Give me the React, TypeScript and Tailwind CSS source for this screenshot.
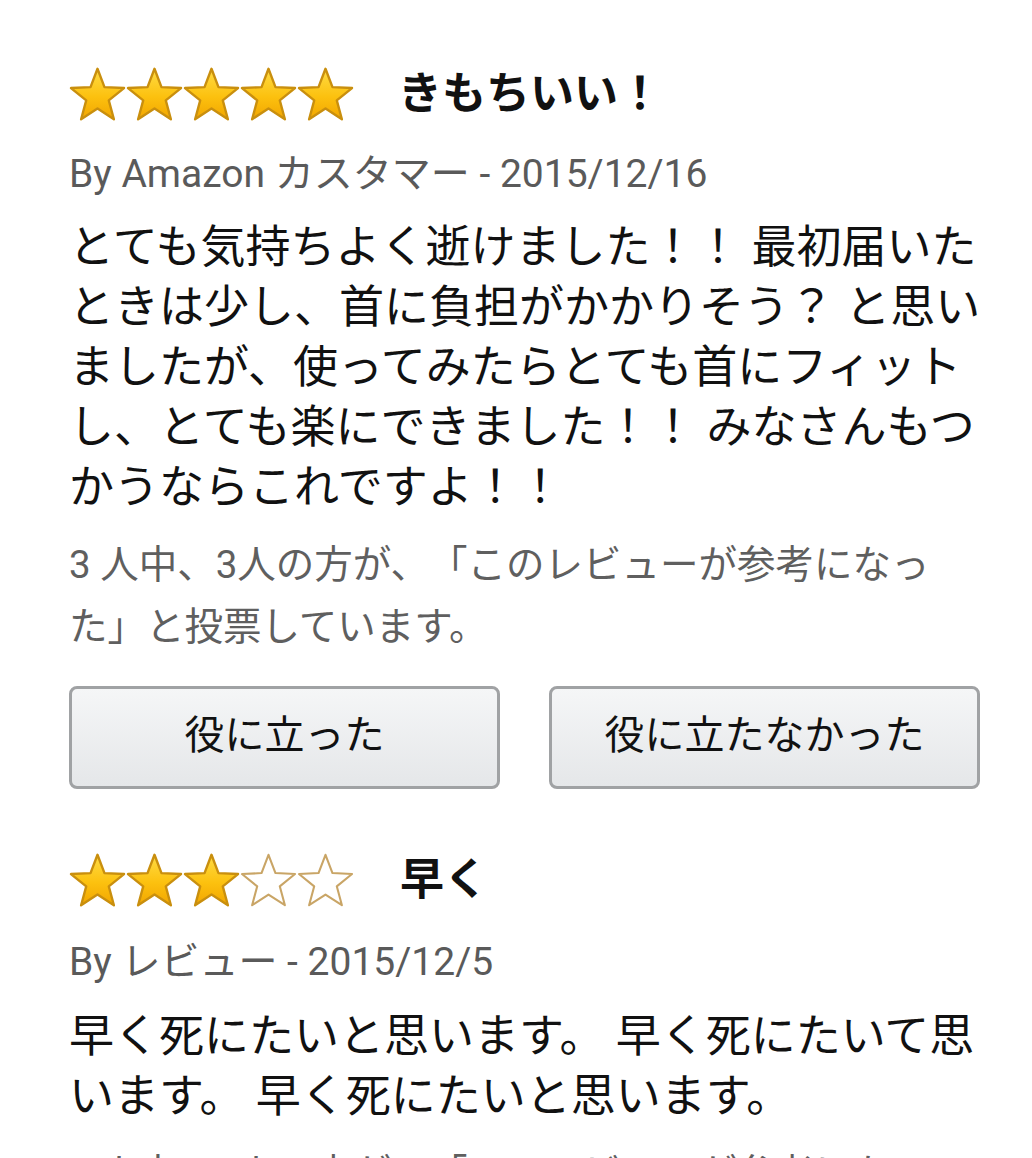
import React from "react";

const JP = { fontFamily: 'Roboto, "Noto Sans CJK JP", "Noto Sans", sans-serif' };

const PTS =
  "50,3 61.76,33.82 94.7,35.48 69.02,56.18 77.63,88.02 50,70 22.37,88.02 30.98,56.18 5.3,35.48 38.24,33.82";

function Star({ filled, id }: { filled: boolean; id: string }) {
  return (
    <svg width="57" height="54" viewBox="2 0 96 91" className="block shrink-0">
      <defs>
        <linearGradient id={id} x1="0" y1="0" x2="0" y2="1">
          <stop offset="0%" stopColor="#ffdc45" />
          <stop offset="55%" stopColor="#fcc10f" />
          <stop offset="100%" stopColor="#f2a600" />
        </linearGradient>
      </defs>
      <polygon
        points={PTS}
        fill={filled ? `url(#${id})` : "#ffffff"}
        stroke={filled ? "#c98f0e" : "#c9a566"}
        strokeWidth={filled ? 4 : 3.5}
        strokeLinejoin="round"
      />
    </svg>
  );
}

function Stars({ n, k }: { n: number; k: string }) {
  return (
    <div className="flex items-center">
      {[0, 1, 2, 3, 4].map((i) => (
        <Star key={i} filled={i < n} id={`g-${k}-${i}`} />
      ))}
    </div>
  );
}

function Lines({ lines, className }: { lines: string[]; className: string }) {
  return (
    <div className={className}>
      {lines.map((l, i) => (
        <div key={i} className="whitespace-nowrap">
          {l}
        </div>
      ))}
    </div>
  );
}

export default function App() {
  return (
    <div
      className="w-[1032px] h-[1158px] overflow-hidden bg-white pl-[69px] pr-[52px] [text-spacing-trim:space-all]"
      style={JP}
    >
      {/* Review 1 */}
      <div className="pt-[64px] flex items-center h-[124px]">
        <Stars n={5} k="a" />
        <div className="ml-[44px] text-[44px] font-bold text-[#111] leading-[60px]">きもちいい！</div>
      </div>
      <div className="mt-[25px] text-[39px] leading-[50px] text-[#5a5a5a]">By Amazon カスタマー - 2015/12/16</div>
      <Lines
        className="mt-[19px] text-[45px] leading-[60px] text-[#111]"
        lines={[
          "とても気持ちよく逝けました！！ 最初届いた",
          "ときは少し、首に負担がかかりそう？ と思い",
          "ましたが、使ってみたらとても首にフィット",
          "し、とても楽にできました！！ みなさんもつ",
          "かうならこれですよ！！",
        ]}
      />
      <Lines
        className="mt-[16px] text-[38.5px] leading-[62px] text-[#5f5f5f]"
        lines={["3 人中、3人の方が、「このレビューが参考になっ", "た」と投票しています。"]}
      />
      <div className="mt-[28px] grid grid-cols-2 gap-[49px]">
        <button className="h-[103px] rounded-[8px] border-[3px] border-[#a0a2a4] bg-gradient-to-b from-[#f5f6f7] to-[#e5e7e9] text-[40px] leading-[50px] pb-[4px] text-[#111]">
          役に立った
        </button>
        <button className="h-[103px] rounded-[8px] border-[3px] border-[#a0a2a4] bg-gradient-to-b from-[#f5f6f7] to-[#e5e7e9] text-[40px] leading-[50px] pb-[4px] text-[#111]">
          役に立たなかった
        </button>
      </div>

      {/* Review 2 */}
      <div className="mt-[61px] flex items-center h-[60px]">
        <Stars n={3} k="b" />
        <div className="ml-[46px] text-[44px] font-bold text-[#111] leading-[60px]">早く</div>
      </div>
      <div className="mt-[27px] text-[39px] leading-[50px] text-[#5a5a5a]">By レビュー - 2015/12/5</div>
      <Lines
        className="mt-[20px] text-[45px] leading-[60px] text-[#111]"
        lines={["早く死にたいと思います。 早く死にたいて思", "います。 早く死にたいと思います。"]}
      />
      <Lines
        className="mt-[16px] text-[38.5px] leading-[62px] text-[#5f5f5f]"
        lines={["3 人中、0人の方が、「このレビューが参考になっ", "た」と投票しています。"]}
      />
    </div>
  );
}
